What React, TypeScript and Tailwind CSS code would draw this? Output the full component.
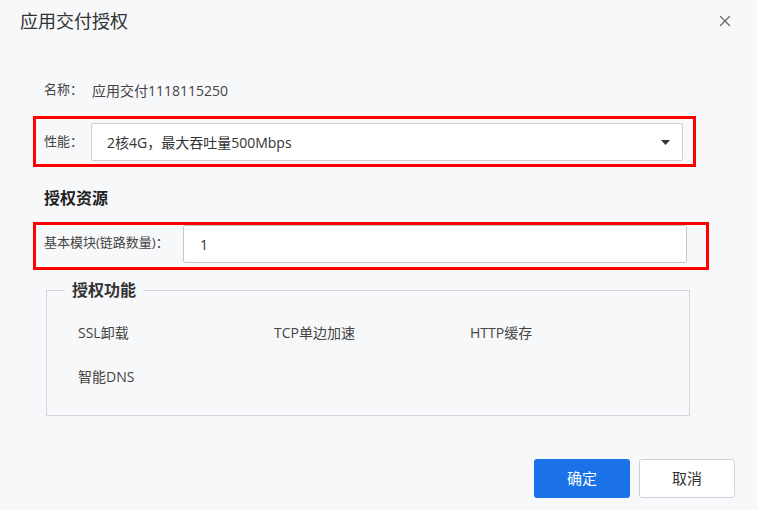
import { X } from "lucide-react";

const FEATURES = ["SSL卸载", "TCP单边加速", "HTTP缓存", "智能DNS"];

export default function App() {
  return (
    <div
      className="relative h-[510px] w-[757px] overflow-hidden bg-[#f7f8fa] text-[#333]"
      style={{ fontFamily: '"Open Sans", "Noto Sans CJK SC", sans-serif' }}
    >
      <div className="flex h-[40px] items-center justify-between pl-[20px] pr-[23px] pt-[2px]">
        <div className="text-[18px] leading-[24px] text-[#333]">应用交付授权</div>
        <X className="h-[18px] w-[18px] text-[#666]" strokeWidth={1.6} />
      </div>

      <div className="pl-[33px]">
        <div className="mt-[40px] flex h-[20px] items-center pl-[11px] text-[#444]">
          <span className="w-[48px] text-[13px]">名称：</span>
          <span className="text-[14px]">应用交付1118115250</span>
        </div>

        <div className="mt-[16px] flex h-[51px] w-[663px] items-center border-[3px] border-[#ff0000] pl-[8px] pt-[1px]">
          <span className="w-[47px] shrink-0 text-[13px] text-[#444]">性能：</span>
          <div className="flex h-[38px] w-[592px] items-center justify-between rounded-[2px] border border-[#ccd0d6] bg-white pl-[15px] pr-[12px]">
            <span className="text-[14px] text-[#333]">2核4G，最大吞吐量500Mbps</span>
            <svg width="9" height="5" viewBox="0 0 9 5">
              <path d="M0 0 L9 0 L4.5 5 Z" fill="#333" />
            </svg>
          </div>
        </div>

        <div className="mt-[20px] pl-[11px] text-[16px] font-bold leading-[22px] text-[#222]">授权资源</div>

        <div className="mt-[13px] flex h-[48px] w-[676px] items-start border-[3px] border-[#ff0000] pl-[8px]">
          <span className="mt-[8px] w-[139px] shrink-0 text-[13px] text-[#444]">基本模块(链路数量)：</span>
          <div className="flex h-[38px] w-[504px] items-center rounded-[2px] border border-[#c4c8ce] bg-white pl-[16px] text-[14px] text-[#333]">
            1
          </div>
        </div>

        <fieldset className="ml-[13px] mt-[9px] h-[137px] w-[644px] border border-[#d3d6dc]">
          <legend className="ml-[18px] px-[7px] text-[16px] font-bold leading-[22px] text-[#333]">授权功能</legend>
          <div className="ml-[31px] mt-[22px] grid grid-cols-[196px_196px_196px] gap-y-[24px] text-[14px] leading-[20px] text-[#444]">
            {FEATURES.map((f) => (
              <div key={f}>{f}</div>
            ))}
          </div>
        </fieldset>
      </div>

      <div className="mt-[43px] flex justify-end gap-[9px] pr-[22px]">
        <button className="h-[39px] w-[96px] rounded-[3px] bg-[#1b72e8] text-[15px] text-white">确定</button>
        <button className="h-[39px] w-[96px] rounded-[3px] border border-[#cdd0d6] bg-white text-[15px] text-[#333]">取消</button>
      </div>
    </div>
  );
}
